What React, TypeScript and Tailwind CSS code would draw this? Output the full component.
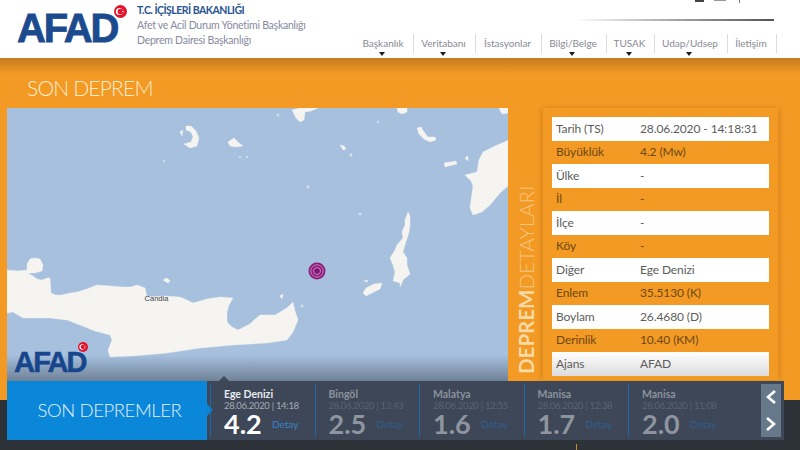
import React from "react";

const nav = [
  { t: "Başkanlık", w: "w-[59px]", a: true },
  { t: "Veritabanı", w: "w-[62px]", a: true },
  { t: "İstasyonlar", w: "w-[66px]", a: false },
  { t: "Bilgi/Belge", w: "w-[65px]", a: true },
  { t: "TUSAK", w: "w-[48px]", a: true },
  { t: "Udap/Udsep", w: "w-[73px]", a: true },
  { t: "İletişim", w: "w-[49px]", a: false },
];

const rows = [
  ["Tarih (TS)", "28.06.2020 - 14:18:31"],
  ["Büyüklük", "4.2 (Mw)"],
  ["Ülke", "-"],
  ["İl", "-"],
  ["İlçe", "-"],
  ["Köy", "-"],
  ["Diğer", "Ege Denizi"],
  ["Enlem", "35.5130 (K)"],
  ["Boylam", "26.4680 (D)"],
  ["Derinlik", "10.40 (KM)"],
];

const quakes = [
  { p: "Ege Denizi", d: "28.06.2020 | 14:18", m: "4.2", active: true },
  { p: "Bingöl", d: "28.06.2020 | 13:43", m: "2.5", active: false },
  { p: "Malatya", d: "28.06.2020 | 12:55", m: "1.6", active: false },
  { p: "Manisa", d: "28.06.2020 | 12:38", m: "1.7", active: false },
  { p: "Manisa", d: "28.06.2020 | 11:08", m: "2.0", active: false },
];

function Flag({ className }: { className: string }) {
  return (
    <svg viewBox="0 0 24 24" className={className}>
      <circle cx="12" cy="12" r="12" fill="#e3132c" />
      <circle cx="10" cy="12" r="6.5" fill="#fff" />
      <circle cx="11.8" cy="12" r="5.2" fill="#e3132c" />
      <polygon points="14,12 19,10 17,12 19,14.5" fill="#fff" />
    </svg>
  );
}

function MapArt() {
  const land = "#f5f4f1";
  return (
    <svg viewBox="7 108 501 280" className="block w-full h-full">
      <rect x="7" y="108" width="501" height="280" fill="#a6c0de" />
      <g fill={land} stroke={land} strokeWidth="0.4" strokeLinejoin="round">
        {/* Crete */}
        <path d="M7 270 L18 271 L27 270 L27 264 L30 259 L34 258 L40 259 L43 265 L42 271 L35 273 L28 273 L33 276 L37 279 L42 280 L47 278 L50 278 L51 293 L56 295 L62 295 L70 293 L77 292 L87 289 L97 285 L110 286 L123 287 L131 287 L137 285 L145 288 L147 297 L165 296 L180 297 L187 300 L193 303 L207 299 L220 297 L233 298 L229 305 L227 312 L227 322 L232 327 L238 330 L250 324 L254 320 L260 315 L268 315 L275 315 L282 311 L288 307 L293 302 L295 311 L298 320 L293 332 L287 340 L267 343 L233 345 L200 348 L167 353 L133 356 L110 357 L108 350 L112 340 L110 335 L95 331 L80 325 L67 320 L50 318 L23 318 L13 312 L7 313 Z" />
        {/* Karpathos */}
        <path d="M408 212 L405 220 L405 225 L402 232 L403 238 L397 245 L395 250 L390 258 L393 265 L395 272 L393 281 L400 283 L400 287 L403 280 L410 274 L407 265 L407 258 L403 252 L405 245 L409 232 L410 225 L410 216 Z" />
        {/* Kasos */}
        <path d="M363 293 L366 288 L374 284 L382 283 L380 289 L372 293 L366 296 Z" />
        <path d="M364 281 L368 280 L367 282 Z" />
        {/* Rhodes */}
        <path d="M509 140 L495 146 L483 152 L479 160 L477 172 L465 175 L471 181 L473 186 L470 208 L473 215 L482 212 L490 205 L500 193 L509 185 Z" />
        {/* Santorini */}
        <path d="M186 126 L191 126 L196 131 L199 138 L197 146 L190 148 L184 144 L191 142 L193 137 L191 132 L186 130 L186 126 Z" />
        <path d="M180 132 L183 130 L182 136 Z" />
        {/* Anafi */}
        <path d="M228 142 L234 138 L239 143 L243 146 L235 147 L230 146 Z" />
        <circle cx="240" cy="157" r="1" opacity=".6" />
        <circle cx="247" cy="157" r="1" opacity=".6" />
        <circle cx="164" cy="161" r="1" opacity=".6" />
        {/* Dia */}
        <path d="M163 280 L167 278 L170 281 L168 283 Z" />
        {/* Top islands */}
        <path d="M292 110 L300 108 L318 108 L311 111 L305 112 L304 120 L300 122 L296 118 Z" />
        <path d="M397 108 L407 108 L407 112 L402 114 L398 112 Z" />
        <path d="M499 108 L508 108 L508 113 L502 114 Z" />
        <path d="M417 128 L421 127 L424 132 L428 137 L435 137 L436 140 L430 142 L424 139 L419 134 Z" />
        <path d="M340 145 L344 146 L346 149 L343 150 Z" />
        <circle cx="351" cy="155" r="1.3" opacity=".7" />
        <circle cx="278" cy="115" r="1.2" opacity=".6" />
        <circle cx="378" cy="122" r="1" opacity=".6" />
        <circle cx="308" cy="187" r="1.3" opacity=".6" />
        <circle cx="360" cy="214" r="1.3" opacity=".6" />
        <path d="M444 163 L456 161 L457 164 L445 167 Z" />
        <path d="M465 158 L468 156 L468 161 Z" />
        <path d="M280 296 L283 294 L282 299 Z" />
        <circle cx="302" cy="306" r="1.2" opacity=".7" />
      </g>
      <text x="156.5" y="300.5" textAnchor="middle" fontSize="7.5" fill="#444" fontFamily="'Liberation Sans', sans-serif">Candia</text>
      <g fill="none">
        <circle cx="317" cy="271" r="8.5" fill="#8d1a7c" />
        <circle cx="317" cy="271" r="6.2" stroke="#d49ecb" strokeWidth="0.8" />
        <circle cx="317" cy="271" r="3.5" stroke="#d49ecb" strokeWidth="0.8" />
        <circle cx="317" cy="271" r="1.8" fill="#6d1b72" />
      </g>
    </svg>
  );
}

export default function App() {
  return (
    <div className="relative w-[800px] h-[450px] overflow-hidden bg-[#2d3239] font-['Lato','Noto_Sans',sans-serif]">
      {/* Header */}
      <header className="relative flex h-[58px] bg-white">
        <div className="relative w-[137px] pl-[17px] pt-[6px]">
          <span className="block font-['Liberation_Sans',sans-serif] font-bold text-[40px] leading-[44px] tracking-[-2.2px] text-[#1c4a8e] [-webkit-text-stroke:0.8px_#1c4a8e]">AFAD</span>
          <Flag className="absolute left-[114px] top-[5px] w-[13px] h-[13px]" />
        </div>
        <div className="pt-[3px] w-[218px]">
          <p className="text-[10.5px] leading-[15px] font-bold tracking-[-0.5px] text-[#2a5590]">T.C. İÇİŞLERİ BAKANLIĞI</p>
          <p className="text-[10.5px] leading-[15px] tracking-[-0.25px] text-[#858aa0] whitespace-nowrap">Afet ve Acil Durum Yönetimi Başkanlığı</p>
          <p className="text-[10.5px] leading-[15px] tracking-[-0.25px] text-[#858aa0] whitespace-nowrap">Deprem Dairesi Başkanlığı</p>
        </div>
        <div className="relative flex-1 pt-[34px]">
          <div className="absolute left-[220px] top-[19px] w-[199px] h-[2px] bg-gradient-to-r from-white to-[#555]" />
          <div className="absolute left-[340px] top-0 flex gap-[5px]">
            <span className="w-[9px] h-[2px] bg-[#444]" />
            <span className="w-[12px] h-[1px] ml-[5px] bg-[#999]" />
            <span className="w-[1px] h-[3px] ml-[8px] bg-[#777]" />
          </div>
          <nav className="flex">
            {nav.map((n) => (
              <div key={n.t} className={`${n.w} relative h-[19px] border-r border-[#dcdcdc] text-center text-[10px] leading-[18px] text-[#8a8a92] whitespace-nowrap pr-[2px]`}>
                {n.t}
                {n.a && <span className="absolute left-1/2 -ml-[5px] top-[18px] w-0 h-0 border-x-[3.5px] border-x-transparent border-t-[4px] border-t-[#1c1c1c]" />}
              </div>
            ))}
          </nav>
        </div>
      </header>

      {/* Orange section */}
      <section className="h-[342px] bg-[#f39a24] bg-gradient-to-b from-[#c47a1e] to-[#f39a24] bg-[length:100%_16px] bg-no-repeat">
        <h1 className="pl-[27px] pt-[16px] h-[50px] text-[21px] leading-[28px] font-light text-[#fdeccf] tracking-[-0.8px]">SON DEPREM</h1>
        <div className="flex pl-[7px]">
          <div className="relative w-[501px] h-[280px] overflow-hidden">
            <MapArt />
            <div className="absolute inset-x-0 bottom-[7px] h-[26px] bg-gradient-to-b from-transparent to-[#3a4350]/50" />
            <div className="absolute left-[7px] top-[238px]">
              <span className="block font-['Liberation_Sans',sans-serif] font-bold text-[29px] leading-[32px] tracking-[-1.8px] text-[#17468c] [-webkit-text-stroke:0.5px_#17468c]">AFAD</span>
              <Flag className="absolute left-[64px] top-[-4px] w-[10px] h-[10px]" />
            </div>
          </div>
          <div className="flex w-[35px] justify-center">
            <div className="relative w-[24px] h-[268px]">
              <div className="absolute left-1/2 top-[266px] origin-left -rotate-90 -translate-y-1/2 whitespace-nowrap text-[20.5px] leading-[24px]">
                <span className="font-bold text-[#f9d9a6]">DEPREM</span><span className="font-light text-[#f9c581]">DETAYLARI</span>
              </div>
            </div>
          </div>
          <div className="w-[235px] h-[272px] px-[9px] pt-[9px] shadow-[-3px_0_4px_rgba(150,90,10,.2),3px_0_4px_rgba(150,90,10,.2)]">
            {rows.map(([a, b], i) => (
              <div key={a} className={`flex h-[23.5px] items-center px-[4px] text-[12px] tracking-[-0.1px] ${i % 2 === 0 ? "bg-white text-[#5c5c5c]" : "text-[#6d4713]"}`}>
                <span className="w-[84px]">{a}</span>
                <span>{b}</span>
              </div>
            ))}
            <div className="flex h-[23.5px] items-center px-[4px] text-[12px] tracking-[-0.1px] text-[#5c5c5c] bg-gradient-to-b from-white to-[#dcdcdc]">
              <span className="w-[84px]">Ajans</span>
              <span>AFAD</span>
            </div>
          </div>
        </div>
      </section>

      {/* Dark footer tick */}
      <div className="absolute left-[576px] top-[444px] w-[1px] h-[6px] bg-[#c98a2e]" />

      {/* Recent quakes bar */}
      <div className="absolute left-[7px] top-[381px] flex w-[777px] h-[59px] bg-[#3d4757]">
        <div className="relative flex w-[200px] items-center justify-center pl-[5px] bg-[#0a87d9] text-[18.5px] font-light text-[#e6f3fc] tracking-[-0.4px]">
          SON DEPREMLER
          <span className="absolute left-full top-[23px] w-0 h-0 border-y-[6px] border-y-transparent border-l-[6px] border-l-[#0a87d9]" />
        </div>
        <div className="flex pt-[3px] h-[56px]">
          {quakes.map((q, i) => (
            <div key={i} className={`relative ${i === 0 ? "ml-[3px]" : ""} w-[104.5px] h-[53px] border-l border-[#1c6aa8] pl-[13px] pt-[4px]`}>
              {q.active && <span className="absolute left-[8px] top-[-8px] w-0 h-0 border-x-[5px] border-x-transparent border-b-[5px] border-b-[#3d4757]" />}
              <p className={`text-[10.5px] leading-[12px] font-bold ${q.active ? "text-[#e8eaed]" : "text-[#8b929c]"}`}>{q.p}</p>
              <p className={`text-[9.5px] leading-[11px] whitespace-nowrap tracking-[-0.3px] ${q.active ? "text-[#a5abb3]" : "text-[#596373]"}`}>{q.d}</p>
              <div className="mt-[2px] flex items-center h-[22px]">
                <span className={`w-[48px] text-[27px] leading-[22px] font-bold ${q.active ? "text-white" : "text-[#8f959e]"}`}>{q.m}</span>
                <span className={`text-[10px] leading-[12px] ${q.active ? "text-[#3b82c4]" : "text-[#2f5f8e]"}`}>Detay</span>
              </div>
            </div>
          ))}
        </div>
        <div className="ml-[28.5px] mt-[3px] flex h-[53px] w-[20px] flex-col items-center justify-around bg-[#65798a]">
          <svg viewBox="0 0 12 14" className="w-[12px] h-[14px]" fill="none" stroke="#fff" strokeWidth="2.6"><path d="M10 1 L3 7 L10 13" /></svg>
          <svg viewBox="0 0 12 14" className="w-[12px] h-[14px]" fill="none" stroke="#fff" strokeWidth="2.6"><path d="M2 1 L9 7 L2 13" /></svg>
        </div>
      </div>
    </div>
  );
}
